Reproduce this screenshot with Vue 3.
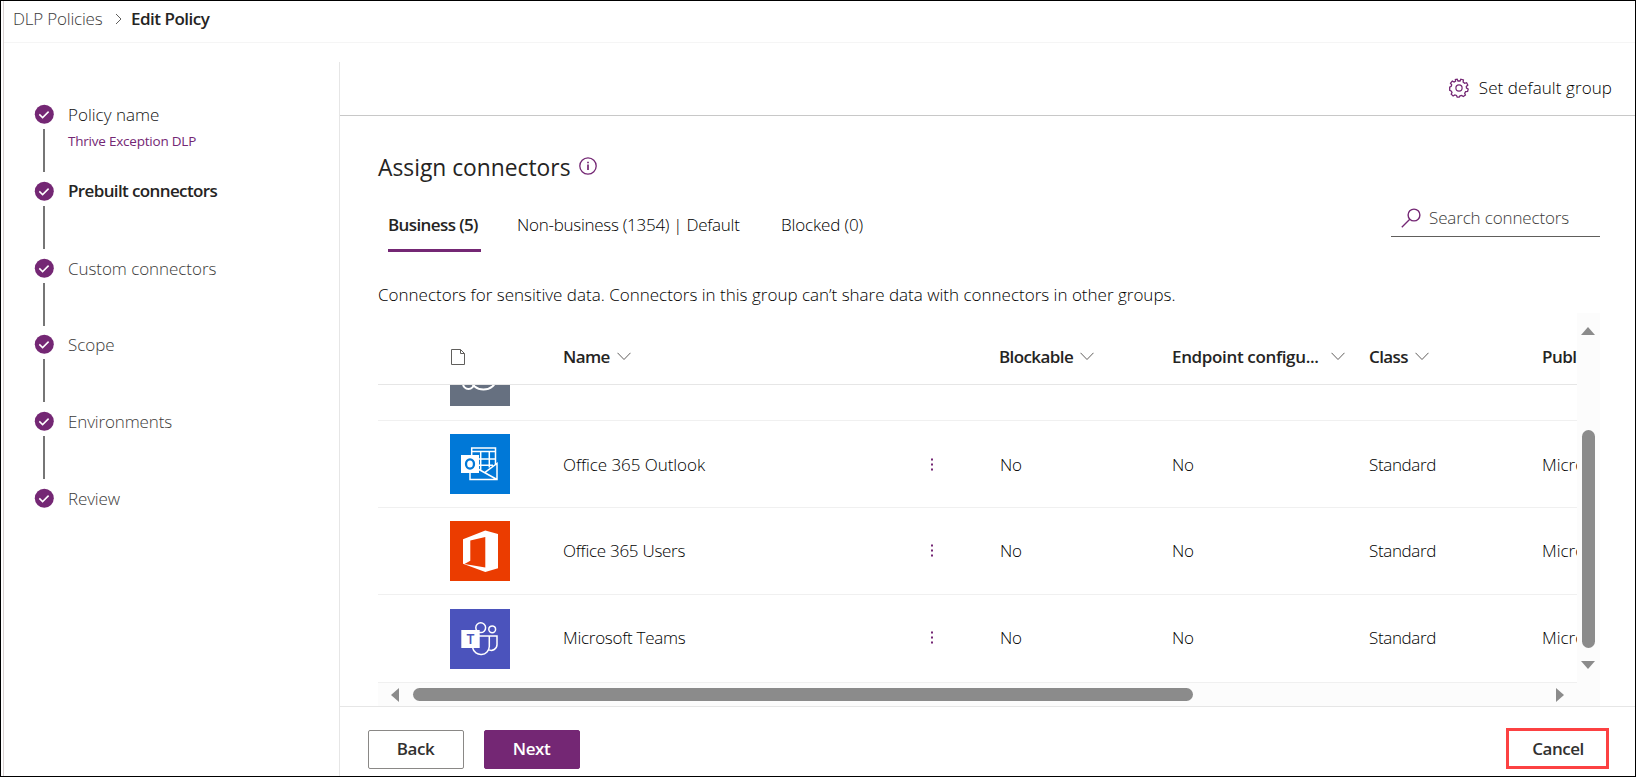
<script setup>
const steps = [
  { label: 'Policy name', note: 'Thrive Exception DLP', state: 'visited', fit: 'ls-0' },
  { label: 'Prebuilt connectors', state: 'current', fit: 'ls-62' },
  { label: 'Custom connectors', state: 'upcoming', fit: 'ls-6' },
  { label: 'Scope', state: 'upcoming', fit: 'ls-6' },
  { label: 'Environments', state: 'upcoming', fit: 'ls-14' },
  { label: 'Review', state: 'upcoming', fit: 'ls-14' },
]
const rows = [
  { name: 'Office 365 Outlook', icon: 'outlook', fit: 'ls-6' },
  { name: 'Office 365 Users', icon: 'office', fit: 'ls-27' },
  { name: 'Microsoft Teams', icon: 'teams', fit: 'ls-27' },
]
</script>

<template>
  <div class="app">
    <header class="crumbs">
      <span class="crumb-link ls-20">DLP Policies</span>
      <svg class="crumb-sep" width="7" height="12" viewBox="0 0 7 12"><path d="M1 1l5 5-5 5" /></svg>
      <span class="crumb-here ls-50">Edit Policy</span>
    </header>

    <div class="body">
      <nav class="steps">
        <div v-for="s in steps" :key="s.label" class="step" :class="s.state">
          <div class="rail">
            <svg width="20" height="20" viewBox="0 0 20 20">
              <circle cx="10.300" cy="10.300" r="9.500" fill="#742774" />
              <path d="M5.300 10.400l3.300 3.200 6-6" fill="none" stroke="#fff" stroke-width="1.500" />
            </svg>
            <i class="bar"></i>
          </div>
          <div class="step-text">
            <div class="step-label" :class="s.fit">{{ s.label }}</div>
            <div v-if="s.note" class="step-note">{{ s.note }}</div>
          </div>
        </div>
      </nav>

      <main class="main">
        <div class="toolbar">
          <svg width="20" height="20" viewBox="0 0 20 20" fill="none" stroke="#742774">
            <path stroke-width="1.300" d="M8.200 1.200L9 3h2l.8-1.800 2.600.8-.3 2 1.500 1.300 2-.6 1.200 2.300-1.500 1.400.2 1.600 1.700 1-.6 2.500-2 .2-.9 1.500.7 1.800-2.100 1.500-1.600-1.100-1.700.5-.8 1.300H8.200l-.7-1.700-1.700-.6-1.700 1.100L2.200 16.200l.8-1.800-.9-1.500-1.400-.6V9.200l1.500-.8.5-1.600-1.200-1.600L3.300 3.100l1.800.9 1.500-.9-.2-1.500z" />
            <circle cx="10" cy="10" r="3.100" stroke-width="1.200" />
          </svg>
          <span class="wide-text">Set default group</span>
        </div>

        <section class="content">
          <h1 class="title">
            <span>Assign connectors</span>
            <svg width="18" height="18" viewBox="0 0 18 18">
              <circle cx="9" cy="9" r="8.200" fill="none" stroke="#742774" stroke-width="1.300" />
              <path d="M9 7.500v5.500M9 4.700v1.600" stroke="#742774" stroke-width="1.700" />
            </svg>
          </h1>

          <div class="tab-row">
            <div class="tab active"><span class="ls-60">Business (5)</span></div>
            <div class="tab wide"><span class="ls-27">Non-business (1354) | Default</span></div>
            <div class="tab"><span class="ls-14">Blocked (0)</span></div>
            <div class="search">
              <svg width="20" height="20" viewBox="0 0 20 20" fill="none" stroke="#742774">
                <circle cx="13" cy="7" r="5.900" stroke-width="1.400" />
                <path d="M8.800 11.200L.800 19.200" stroke-width="1.300" />
              </svg>
              <span class="ls-14">Search connectors</span>
            </div>
          </div>

          <p class="hint">Connectors for sensitive data. Connectors in this group can’t share data with connectors in other groups.</p>

          <div class="pane">
            <div class="grid">
              <div class="row head">
                <span></span>
                <svg class="doc" width="16" height="18" viewBox="0 0 16 18"><path d="M1.500 1.500h9l4 4v11h-13zM10.500 1.500v4h4" /></svg>
                <div class="th"><span class="ls-60">Name</span><svg width="14" height="9" viewBox="0 0 14 9"><path d="M.5.800L7 7.500 13.500.800" /></svg></div>
                <span></span>
                <div class="th back"><span class="ls-60">Blockable</span><svg width="14" height="9" viewBox="0 0 14 9"><path d="M.5.800L7 7.500 13.500.800" /></svg></div>
                <div class="th far"><span class="ls-35">Endpoint configu...</span><svg width="14" height="9" viewBox="0 0 14 9"><path d="M.5.800L7 7.500 13.500.800" /></svg></div>
                <div class="th"><span class="ls-62">Class</span><svg width="14" height="9" viewBox="0 0 14 9"><path d="M.5.800L7 7.500 13.500.800" /></svg></div>
                <div class="th clip"><span class="ls-50">Publ</span></div>
              </div>

              <div class="row partial">
                <span></span>
                <svg class="tile" width="60" height="60" viewBox="0 0 60 60">
                  <path d="M0 0h60v60H0z" fill="#667080" />
                  <g fill="none" stroke="#fff" stroke-width="2">
                    <circle cx="18.500" cy="37.500" r="5.500" />
                    <ellipse cx="33.500" cy="33" rx="12.500" ry="10.500" />
                  </g>
                </svg>
              </div>

              <div v-for="r in rows" :key="r.name" class="row item" :class="r.icon">
                <span></span>
                <svg v-if="r.icon === 'outlook'" class="tile" width="60" height="60" viewBox="0 0 60 60">
                  <path d="M0 0h60v60H0z" fill="#0078d7" />
                  <path d="M21.700 22v-8h23.800v16M21.700 17.500h23.800M30.700 17.500v19M39.300 17.500v16M29 25h16.500M29 31.300h14M20 38v7.500h27v-16L35 38.300M29 35.500l18 10" fill="none" stroke="#fff" stroke-width="1.500" />
                  <path d="M11 21h18v18H11z" fill="#fff" />
                  <ellipse cx="20" cy="30" rx="4" ry="4.700" fill="none" stroke="#0078d7" stroke-width="2.300" />
                </svg>
                <svg v-else-if="r.icon === 'office'" class="tile" width="60" height="60" viewBox="0 0 60 60">
                  <path d="M0 0h60v60H0z" fill="#eb3c00" />
                  <path d="M13 18.300L35.300 9.500 48 13v34.300L35.300 51 13 42.700z" fill="#fff" />
                  <path d="M20.300 19.500L35.300 16v30.500L14.500 43l5.800-3.300z" fill="#eb3c00" />
                </svg>
                <svg v-else class="tile" width="60" height="60" viewBox="0 0 60 60">
                  <path d="M0 0h60v60H0z" fill="#4b53bc" />
                  <g fill="none" stroke="#fff" stroke-width="1.500">
                    <circle cx="30.700" cy="18.700" r="4.900" />
                    <circle cx="42.200" cy="20.300" r="3.400" />
                    <path d="M29 27h18v8.500a5.800 5.800 0 0 1-8.500 5.200M39.300 27v10.500a8.400 8.400 0 0 1-16.600 1.500" />
                  </g>
                  <path d="M11.300 21h18.400v18H11.300z" fill="#fff" />
                  <text x="20.500" y="35.200" text-anchor="middle" font-family="Open Sans, sans-serif" font-size="14" font-weight="600" fill="#4b53bc">T</text>
                </svg>
                <span class="cell" :class="r.fit">{{ r.name }}</span>
                <svg class="dots" width="3" height="13" viewBox="0 0 3 13"><path d="M0 .500h2v2H0zM0 5.500h2v2H0zM0 10.500h2v2H0z" /></svg>
                <span class="cell ls-35">No</span>
                <span class="cell ls-35">No</span>
                <span class="cell ls-35">Standard</span>
                <span class="cell clip">Micro</span>
              </div>
            </div>

            <div class="vscroll">
              <i class="arrow up"></i>
              <i class="vthumb"></i>
              <i class="arrow down"></i>
            </div>
            <div class="hscroll">
              <i class="arrow left"></i>
              <i class="hthumb"></i>
              <i class="arrow right"></i>
            </div>
          </div>
        </section>

        <footer class="actions">
          <button class="btn">Back</button>
          <button class="btn primary">Next</button>
          <button class="btn cancel">Cancel</button>
        </footer>
      </main>
    </div>
  </div>
</template>

<style>
html, body { margin: 0; background: #fff; }
</style>

<style scoped>
* { box-sizing: border-box; }
.app {
  width: 1636px; height: 777px; overflow: hidden;
  border: 1px solid #000;
  background: linear-gradient(#d9d2d2, #d9d2d2) 2px 0 / 1px 100% no-repeat #fff;
  font: 300 17px/24px "Open Sans", "Noto Sans", sans-serif;
  color: #000;
  display: flex; flex-direction: column;
  white-space: nowrap;
}
svg { display: block; flex: none; }
.ls-0 { letter-spacing: 0; }
.ls-6 { letter-spacing: -0.06px; }
.ls-14 { letter-spacing: -0.14px; }
.ls-20 { letter-spacing: -0.2px; }
.ls-27 { letter-spacing: -0.27px; }
.ls-35 { letter-spacing: -0.35px; }
.ls-50 { letter-spacing: -0.5px; }
.ls-60 { letter-spacing: -0.6px; }
.ls-62 { letter-spacing: -0.62px; }
.wide-text { letter-spacing: 0.08px; }

.crumbs {
  height: 42px; margin-left: 3px; padding: 6px 0 0 9px;
  border-bottom: 1px solid #f5f5f5;
  display: flex; align-items: flex-start; flex: none;
}
.crumb-link { color: #3b3a39; width: 102px; }
.crumb-sep { margin: 6px 9px 0 0; fill: none; stroke: #605e5c; stroke-width: 1; }
.crumb-here { font-weight: 600; color: #252423; }

.body { flex: 1; display: grid; grid-template-columns: 339px 1fr; min-height: 0; }
.steps {
  margin-top: 19px; padding: 42px 0 0 33px;
  border-right: 1px solid #e6e6e6;
}
.step { display: flex; height: 76.8px; color: #3b3a39; }
.rail { width: 20px; display: flex; flex-direction: column; align-items: center; }
.bar { width: 2px; height: 43px; margin-top: 5px; background: #767676; }
.step:last-child .bar { display: none; }
.step-text { padding: 1px 0 0 14px; }
.step-label { line-height: 20px; }
.step-note { font-size: 13.500px; font-weight: 400; line-height: 20px; margin-top: 6px; letter-spacing: -0.22px; color: #742774; }
.visited { color: #111; }
.current { color: #252423; font-weight: 600; }
.current .step-text { padding-top: 0; }

.main { display: flex; flex-direction: column; min-width: 0; }
.toolbar {
  height: 73px; flex: none; padding: 36px 23px 0 0;
  border-bottom: 1px solid #c8c8c8;
  display: flex; justify-content: flex-end; gap: 10px;
}
.toolbar svg { margin-top: -1px; }
.toolbar span { line-height: 18px; }

.content { padding-left: 38px; height: 590px; flex: none; }
.title {
  margin: 0; padding-top: 37px; height: 88px;
  font-size: 22.800px; line-height: 30px; font-weight: 400; color: #252423;
  display: flex; gap: 8px;
}
.title svg { margin-top: 4px; }
.tab-row { display: flex; height: 53px; padding-left: 10px; width: 1222px; align-items: flex-start; }
.tab span { display: block; padding-top: 9px; height: 45px; }
.tab.active { width: 93px; font-weight: 600; color: #252423; border-bottom: 3px solid #742774; margin-right: 36px; height: 48px; }
.tab.wide { width: 264px; }
.search {
  margin-left: auto; width: 209px; height: 33px;
  border-bottom: 1px solid #605e5c; color: #3b3a39;
  display: flex; padding: 1px 0 0 10px; gap: 8px;
}
.search svg { margin-top: 3px; }
.search span { line-height: 24px; padding-top: 1px; }
.hint { margin: 0; height: 56px; padding-top: 26px; line-height: 24px; }

.pane { width: 1222px; height: 393px; display: grid; grid-template: 370px 23px / 1199px 23px; }
.grid { overflow: hidden; min-width: 0; }
.row {
  display: grid; align-items: center; overflow: hidden;
  grid-template-columns: 72px 113px 368px 69px 172px 197px 173px 35px;
  border-bottom: 1px solid #f0f0f0;
}
.head { height: 72px; padding-top: 16px; font-weight: 600; color: #252423; border-color: #e6e6e6; }
.doc { fill: none; stroke: #605e5c; }
.th { display: flex; align-items: center; gap: 7px; }
.th.back { margin-left: -1px; }
.th.far { gap: 12px; }
.th svg { fill: none; stroke: #605e5c; stroke-width: 1; }
.clip { overflow: hidden; min-width: 0; }
.partial { height: 36px; align-items: start; }
.partial .tile { margin-top: -39px; }
.item { height: 87px; }
.teams { height: 88px; }
.teams .tile { margin-top: 1px; }
.outlook .cell { padding-top: 2px; }
.teams .cell { padding-bottom: 1px; }
.office .dots, .teams .dots { margin-top: -2px; }
.dots { fill: #742774; }

.vscroll, .hscroll { background: #fcfcfc; display: flex; align-items: center; }
.vscroll { flex-direction: column; padding: 14px 1px 0 0; height: 393px; }
.hscroll { padding-left: 13px; grid-column: 1; }
.arrow { width: 0; height: 0; border: 7.500px solid transparent; flex: none; }
.up { border-top: 0; border-bottom: 8px solid #8b8b8b; }
.down { border-bottom: 0; border-top: 8px solid #8b8b8b; margin-top: 13px; }
.left { border-left: 0; border-right: 8px solid #8b8b8b; }
.right { border-right: 0; border-left: 8px solid #8b8b8b; margin-left: 363px; }
.vthumb { width: 13px; height: 218px; margin-top: 95px; border-radius: 7px; background: #8b8b8b; flex: none; }
.hthumb { width: 780px; height: 13px; margin-left: 14px; border-radius: 7px; background: #8b8b8b; }

.actions {
  flex: 1; border-top: 1px solid #e6e6e6; padding: 21px 26px 0 28px;
  display: flex; align-items: flex-start; gap: 20px;
}
.btn {
  width: 96px; height: 39px; margin-top: 2px; padding: 0 1px 2px 0;
  font: 600 17px/24px "Open Sans", "Noto Sans", sans-serif; letter-spacing: -0.45px;
  color: #323130; background: #fff; border: 1px solid #8a8886; border-radius: 2px;
}
.primary { background: #742774; border-color: #742774; color: #fff; }
.cancel { width: 103px; height: 41px; margin: 0 0 0 auto; padding: 0 0 0 1px; border: 3px solid #fc4142; border-radius: 0; }
</style>
